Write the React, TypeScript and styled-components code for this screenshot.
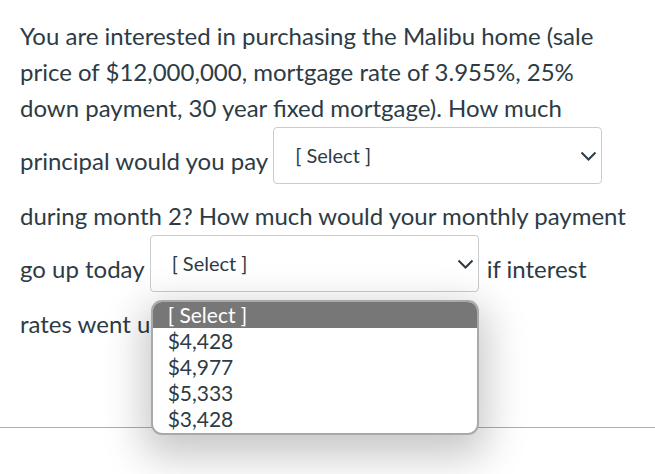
import React from "react";
import styled, { createGlobalStyle } from "styled-components";

const GlobalStyle = createGlobalStyle`
  html, body { margin: 0; padding: 0; background: #ffffff; }
  body { font-family: Lato, "Open Sans", sans-serif; color: #2d3b45; }
`;

const Page = styled.div`
  width: 655px;
  height: 474px;
  overflow: hidden;
  display: flex;
  flex-direction: column;
`;

const Question = styled.div`
  padding: 18px 20px 0 20px;
  font-size: 24px;
  line-height: 36px;
  color: #2d3b45;
`;

const Line = styled.div`
  display: flex;
  align-items: flex-start;
  white-space: nowrap;
  height: 36px;
`;

const TallLine = styled(Line)`
  height: 72px;
  gap: 5px;
`;

const Words = styled.span<{ $after?: boolean }>`
  padding-top: 17px;
  margin-left: ${(p) => (p.$after ? "3px" : "0")};
`;

const SelectWrap = styled.div`
  position: relative;
  display: inline-flex;
  margin-top: 1px;
`;

const SelectBox = styled.div<{ $w: number }>`
  box-sizing: border-box;
  width: ${(p) => p.$w}px;
  height: 57px;
  border: 1px solid #c7cdd1;
  border-radius: 4px;
  background: #fff;
  display: flex;
  align-items: center;
  justify-content: space-between;
  padding: 0 4px 2px 21px;
  font-size: 20px;
  line-height: 24px;
  color: #2d3b45;
`;

const Chevron = () => (
  <svg width="17" height="11" viewBox="0 0 17 11" style={{ marginTop: 3 }}>
    <path d="M1.5 1.5 L8.5 8.5 L15.5 1.5" fill="none" stroke="#2d3b45" strokeWidth="2" />
  </svg>
);

const Menu = styled.div`
  position: absolute;
  top: 65px;
  left: 1px;
  width: 328px;
  box-sizing: border-box;
  border: 2px solid #a9a9a9;
  border-radius: 11px;
  background: #fff;
  overflow: hidden;
  box-shadow: 0 14px 40px 8px rgba(0, 0, 0, 0.22);
  z-index: 5;
  padding-bottom: 1px;
`;

const Option = styled.div<{ $active?: boolean }>`
  height: 26px;
  line-height: 26px;
  font-size: 21px;
  padding-left: 15px;
  color: ${(p) => (p.$active ? "#ffffff" : "#2d3b45")};
  background: ${(p) => (p.$active ? "#777777" : "transparent")};
`;

const Rule = styled.div`
  margin-top: 85px;
  border-top: 1px solid #adadad;
`;

export default function App() {
  return (
    <>
      <GlobalStyle />
      <Page>
        <Question>
          <Line>You are interested in purchasing the Malibu home (sale</Line>
          <Line>price of $12,000,000, mortgage rate of 3.955%, 25%</Line>
          <Line>down payment, 30 year fixed mortgage). How much</Line>
          <TallLine>
            <Words>principal would you pay</Words>
            <SelectWrap>
              <SelectBox $w={329}>
                <span>[ Select ]</span>
                <Chevron />
              </SelectBox>
            </SelectWrap>
          </TallLine>
          <Line>during month 2? How much would your monthly payment</Line>
          <TallLine>
            <Words>go up today</Words>
            <SelectWrap>
              <SelectBox $w={329}>
                <span>[ Select ]</span>
                <Chevron />
              </SelectBox>
              <Menu>
                <Option $active>[ Select ]</Option>
                <Option>$4,428</Option>
                <Option>$4,977</Option>
                <Option>$5,333</Option>
                <Option>$3,428</Option>
              </Menu>
            </SelectWrap>
            <Words $after>if interest</Words>
          </TallLine>
          <Line>rates went up 1%?</Line>
        </Question>
        <Rule />
      </Page>
    </>
  );
}
